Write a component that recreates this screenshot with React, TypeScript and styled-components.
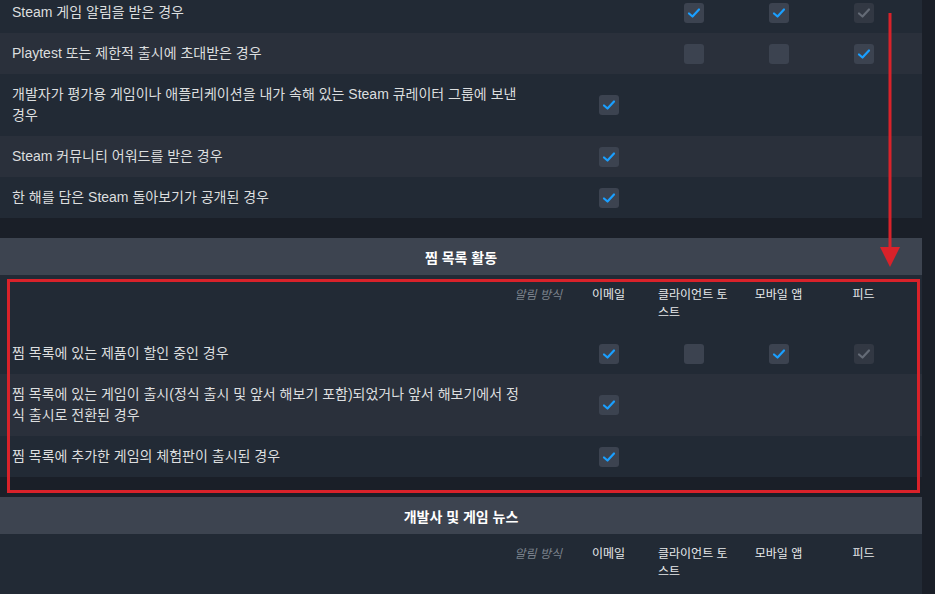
import React from 'react'
import styled, { createGlobalStyle } from 'styled-components'

const GlobalStyle = createGlobalStyle`
  html, body {
    margin: 0;
    padding: 0;
    background: #1a1f28;
    overflow: hidden;
  }
  body {
    font-family: "Liberation Sans", "Noto Sans CJK KR", sans-serif;
    color: #dcdedf;
  }
`

const Page = styled.div`
  position: relative;
  width: 935px;
  height: 594px;
  overflow: hidden;
`

const Scroller = styled.div`
  width: 922px;
  margin-top: -8px;
  display: flex;
  flex-direction: column;
  gap: 20px;
`

const Section = styled.section`
  background: #222a35;
`

const SectionTitle = styled.div`
  height: 37px;
  display: flex;
  align-items: center;
  justify-content: center;
  background: #3d4450;
  color: #ffffff;
  font-size: 14px;
  font-weight: bold;
`

const Row = styled.div<{ $alt?: boolean }>`
  display: grid;
  grid-template-columns: 566px repeat(4, 85px) 1fr;
  align-items: center;
  min-height: 41px;
  background: ${(p) => (p.$alt ? '#2a303b' : 'transparent')};
`

const HeadRow = styled(Row)`
  align-items: start;
  padding: 11px 0 6px;
`

const Label = styled.div`
  padding: 10px 42px 10px 12px;
  font-size: 14px;
  line-height: 21px;
`

const MethodLabel = styled.div`
  text-align: right;
  padding-right: 4px;
  font-size: 12px;
  line-height: 18px;
  font-style: italic;
  color: #7b828c;
`

const ColHead = styled.div`
  display: flex;
  justify-content: center;
  padding: 0 7px;

  span {
    font-size: 12px;
    line-height: 18px;
    color: #e6e8ea;
  }
`

const Cell = styled.div`
  display: flex;
  justify-content: center;
`

const Box = styled.div<{ $disabled?: boolean }>`
  width: 20px;
  height: 20px;
  border-radius: 3px;
  background: ${(p) => (p.$disabled ? '#323843' : '#3c4350')};
  display: flex;
  align-items: center;
  justify-content: center;
`

const RedBox = styled.div`
  position: absolute;
  left: 7px;
  top: 279px;
  width: 913px;
  height: 214px;
  box-sizing: border-box;
  border: 3px solid #d9222a;
  pointer-events: none;
`

const Arrow = styled.svg`
  position: absolute;
  left: 878px;
  top: 10px;
`

type State = 'on' | 'off' | 'locked' | null

const Check = ({ state }: { state: State }) => {
  if (!state) return <Cell />
  return (
    <Cell>
      <Box $disabled={state === 'locked'}>
        {state !== 'off' && (
          <svg width="14" height="14" viewBox="0 0 14 14">
            <polyline
              points="2,7.5 5.5,10.5 12,3.5"
              fill="none"
              stroke={state === 'locked' ? '#646b76' : '#1a9fff'}
              strokeWidth="2.2"
              strokeLinecap="round"
              strokeLinejoin="round"
            />
          </svg>
        )}
      </Box>
    </Cell>
  )
}

type Item = { text: string; states: State[] }

const Header = () => (
  <HeadRow>
    <MethodLabel>알림 방식</MethodLabel>
    <ColHead><span>이메일</span></ColHead>
    <ColHead><span>클라이언트 토스트</span></ColHead>
    <ColHead><span>모바일 앱</span></ColHead>
    <ColHead><span>피드</span></ColHead>
  </HeadRow>
)

const Items = ({ items }: { items: Item[] }) => (
  <>
    {items.map((it, i) => (
      <Row key={it.text} $alt={i % 2 === 1}>
        <Label>{it.text}</Label>
        {it.states.map((s, j) => (
          <Check key={j} state={s} />
        ))}
      </Row>
    ))}
  </>
)

const gameItems: Item[] = [
  { text: 'Steam 게임 알림을 받은 경우', states: [null, 'on', 'on', 'locked'] },
  { text: 'Playtest 또는 제한적 출시에 초대받은 경우', states: [null, 'off', 'off', 'on'] },
  {
    text: '개발자가 평가용 게임이나 애플리케이션을 내가 속해 있는 Steam 큐레이터 그룹에 보낸 경우',
    states: ['on', null, null, null],
  },
  { text: 'Steam 커뮤니티 어워드를 받은 경우', states: ['on', null, null, null] },
  { text: '한 해를 담은 Steam 돌아보기가 공개된 경우', states: ['on', null, null, null] },
]

const wishlistItems: Item[] = [
  { text: '찜 목록에 있는 제품이 할인 중인 경우', states: ['on', 'off', 'on', 'locked'] },
  {
    text: '찜 목록에 있는 게임이 출시(정식 출시 및 앞서 해보기 포함)되었거나 앞서 해보기에서 정식 출시로 전환된 경우',
    states: ['on', null, null, null],
  },
  { text: '찜 목록에 추가한 게임의 체험판이 출시된 경우', states: ['on', null, null, null] },
]

export default function App() {
  return (
    <Page>
      <GlobalStyle />
      <Scroller>
        <Section>
          <Items items={gameItems} />
        </Section>
        <Section>
          <SectionTitle>찜 목록 활동</SectionTitle>
          <Header />
          <Items items={wishlistItems} />
        </Section>
        <Section>
          <SectionTitle>개발사 및 게임 뉴스</SectionTitle>
          <Header />
          <Row />
        </Section>
      </Scroller>
      <RedBox />
      <Arrow width="24" height="262" viewBox="0 0 24 262">
        <line x1="12" y1="3" x2="12" y2="242" stroke="#d9222a" strokeWidth="3" />
        <polygon points="2,237 22,237 12,257" fill="#d9222a" />
      </Arrow>
    </Page>
  )
}
